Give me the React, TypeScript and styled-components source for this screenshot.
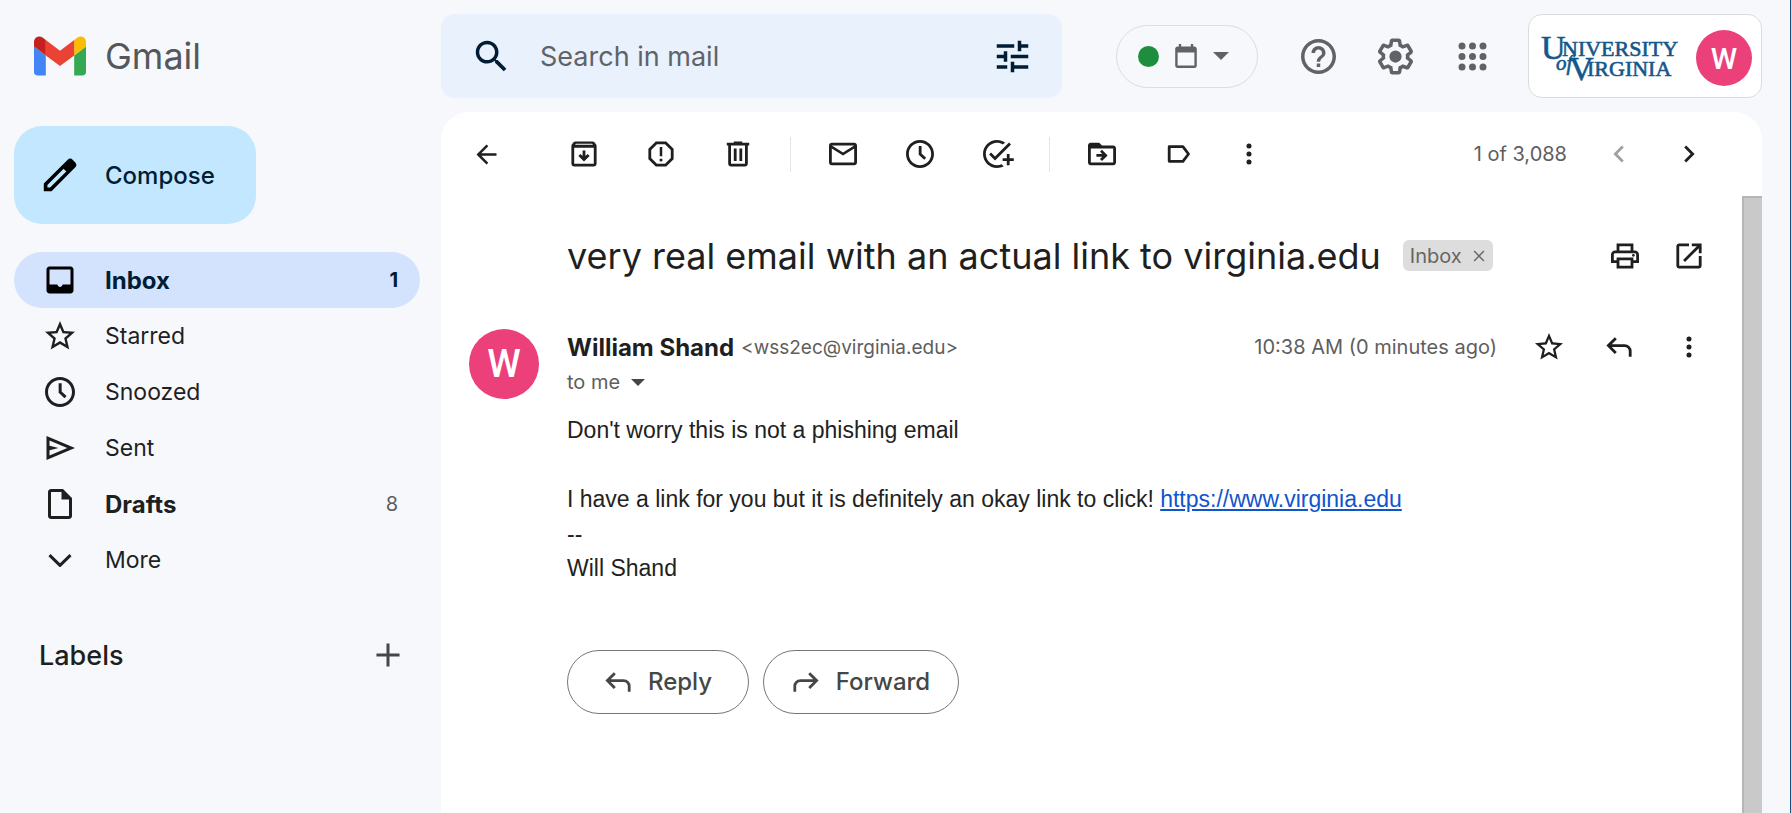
import React from "react";
import styled, { createGlobalStyle, css } from "styled-components";

const colors = {
  page: "#f6f8fc",
  panel: "#ffffff",
  ink: "#1f1f1f",
  navy: "#001d35",
  muted: "#5e5e5e",
  grey: "#5f6368",
  line: "#dadce0",
  pink: "#ec407a",
};

const sans = `Inter, "Open Sans", sans-serif`;

const GlobalStyle = createGlobalStyle`
  *, *::before, *::after { box-sizing: border-box; }
  body { margin: 0; background: ${colors.page}; color: ${colors.ink}; font-family: ${sans}; }
  h1, h2, p { margin: 0; padding: 0; }
  button, input { font: inherit; color: inherit; }
`;

/* ---------- icons ---------- */

const paths = {
  search:
    "M15.5 14h-.79l-.28-.27C15.41 12.59 16 11.11 16 9.5 16 5.91 13.09 3 9.5 3S3 5.91 3 9.5 5.91 16 9.5 16c1.61 0 3.09-.59 4.23-1.57l.27.28v.79l5 4.99L20.49 19l-4.99-5zm-6 0C7.01 14 5 11.99 5 9.5S7.01 5 9.5 5 14 7.01 14 9.5 11.99 14 9.5 14z",
  tune: "M3 17v2h6v-2H3zM3 5v2h10V5H3zm10 16v-2h8v-2h-8v-2h-2v6h2zM7 9v2H3v2h4v2h2V9H7zm14 4v-2H11v2h10zm-6-4h2V7h4V5h-4V3h-2v6z",
  back: "M20 11H7.83l5.59-5.59L12 4l-8 8 8 8 1.41-1.41L7.83 13H20v-2z",
  archive:
    "M20.3 4.6l-1-1.1c-.3-.3-.7-.5-1.2-.5H5.9c-.5 0-.9.2-1.2.5l-1 1.1C3.2 5.1 3 5.6 3 6.2V19c0 1.1.9 2 2 2h14c1.1 0 2-.9 2-2V6.2c0-.6-.2-1.1-.7-1.6zM6.2 4.7h11.6l.6.7H5.6zM5 7.5h14V19H5zM11 9.5h2v4l1.6-1.5 1.4 1.4-4 4-4-4L9.4 12l1.6 1.5z",
  spam: "M15.73 3H8.27L3 8.27v7.46L8.27 21h7.46L21 15.73V8.27L15.73 3zM19 14.9L14.9 19H9.1L5 14.9V9.1L9.1 5h5.8L19 9.1v5.8zM11.1 7h1.8v6.6h-1.8zM12 15.2a1.1 1.1 0 1 0 0 2.2 1.1 1.1 0 0 0 0-2.2z",
  trash:
    "M15 4V3H9v1H4v2h1v13c0 1.1.9 2 2 2h10c1.1 0 2-.9 2-2V6h1V4h-5zm2 15H7V6h10v13zM9 8h2v9H9zM13 8h2v9h-2z",
  mail: "M20 4H4c-1.1 0-2 .9-2 2v12c0 1.1.9 2 2 2h16c1.1 0 2-.9 2-2V6c0-1.1-.9-2-2-2zm0 14H4V8l8 5 8-5v10zm-8-7L4 6h16l-8 5z",
  clock:
    "M12 2C6.48 2 2 6.48 2 12s4.48 10 10 10 10-4.48 10-10S17.52 2 12 2zm0 18c-4.42 0-8-3.58-8-8s3.58-8 8-8 8 3.58 8 8-3.58 8-8 8zM11.1 6.2v6.3l3.9 3.6 1.4-1.5-3.3-3V6.2z",
  task: "M22 5.18L10.59 16.6l-4.24-4.24 1.41-1.41 2.83 2.83 10-10L22 5.18zM12 20c-4.41 0-8-3.59-8-8s3.59-8 8-8c1.57 0 3.04.46 4.28 1.25l1.45-1.45C16.1 2.67 14.13 2 12 2 6.48 2 2 6.48 2 12s4.48 10 10 10c1.73 0 3.36-.44 4.78-1.22l-1.5-1.5c-1 .46-2.11.72-3.28.72zm7-5h-3v2h3v3h2v-3h3v-2h-3v-3h-2v3z",
  move: "M20 6h-8l-2-2H4c-1.1 0-2 .9-2 2v12c0 1.1.9 2 2 2h16c1.1 0 2-.9 2-2V8c0-1.1-.9-2-2-2zm0 12H4V8h16v10zM12.16 12H8v2h4.16l-1.59 1.59L11.99 17 16 13.01 11.99 9l-1.41 1.41L12.16 12z",
  more: "M12 4.5a1.8 1.8 0 1 0 0 3.6 1.8 1.8 0 0 0 0-3.6zM12 10.2a1.8 1.8 0 1 0 0 3.6 1.8 1.8 0 0 0 0-3.6zM12 15.9a1.8 1.8 0 1 0 0 3.6 1.8 1.8 0 0 0 0-3.6z",
  prev: "M15.41 7.41L14 6l-6 6 6 6 1.41-1.41L10.83 12z",
  next: "M10 6L8.59 7.41 13.17 12l-4.58 4.59L10 18l6-6z",
  print:
    "M19 8h-1V3H6v5H5c-1.66 0-3 1.34-3 3v6h4v4h12v-4h4v-6c0-1.66-1.34-3-3-3zM8 5h8v3H8V5zm8 12v2H8v-4h8v2zm2-2v-2H6v2H4v-4c0-.55.45-1 1-1h14c.55 0 1 .45 1 1v4h-2zM18 10.5a1 1 0 1 0 0 2 1 1 0 0 0 0-2z",
  open: "M19 19H5V5h7V3H5c-1.11 0-2 .9-2 2v14c0 1.1.89 2 2 2h14c1.1 0 2-.9 2-2v-7h-2v7zM14 3v2h3.59l-9.83 9.83 1.41 1.41L19 6.41V10h2V3h-7z",
  star: "M22 9.24l-7.19-.62L12 2 9.19 8.63 2 9.24l5.46 4.73L5.82 21 12 17.27 18.18 21l-1.63-7.03L22 9.24zM12 15.4l-3.76 2.27 1-4.28-3.32-2.88 4.38-.38L12 6.1l1.71 4.04 4.38.38-3.32 2.88 1 4.28L12 15.4z",
  reply:
    "M19 19v-4q0-1.25-.875-2.125T16 12H6.825l3.6 3.6L9 17l-6-6 6-6 1.425 1.4-3.6 3.6H16q2.075 0 3.538 1.463T21 15v4z",
  forward:
    "M5 19v-4q0-1.25.875-2.125T8 12h9.175l-3.6 3.6L15 17l6-6-6-6-1.425 1.4 3.6 3.6H8q-2.075 0-3.538 1.463T3 15v4z",
  pen: "M3 21v-4.3L16.3 3.5c.8-.8 1.9-.8 2.7 0l1.5 1.5c.8.8.8 1.9 0 2.7L7.3 21zM5 19h1.5l9-9L14 8.5l-9 9z",
  inbox:
    "M19 3H5c-1.1 0-2 .9-2 2v14c0 1.1.9 2 2 2h14c1.1 0 2-.9 2-2V5c0-1.1-.9-2-2-2zM5 5h14v10h-5.2c-.3 1-1 1.6-1.8 1.6s-1.5-.6-1.8-1.6H5z",
  sent: "M3 20V4l19 8zM5 17l11.85-5L5 7v3.5l6 1.5-6 1.5z",
  file: "M14 2H6c-1.1 0-2 .9-2 2v16c0 1.1.9 2 2 2h12c1.1 0 2-.9 2-2V8l-6-6zM6 20V4h7v5h5v11H6z",
  help: "M11 18h2v-2h-2v2zm1-16C6.48 2 2 6.48 2 12s4.48 10 10 10 10-4.48 10-10S17.52 2 12 2zm0 18c-4.41 0-8-3.59-8-8s3.59-8 8-8 8 3.59 8 8-3.59 8-8 8zm0-14c-2.21 0-4 1.79-4 4h2c0-1.1.9-2 2-2s2 .9 2 2c0 2-3 1.75-3 5h2c0-2.25 3-2.5 3-5 0-2.21-1.79-4-4-4z",
  gear: "M13.85 22.25h-3.7c-.74 0-1.36-.54-1.45-1.27l-.27-1.89c-.27-.14-.53-.29-.79-.46l-1.8.72c-.7.26-1.47-.03-1.81-.65L2.2 15.53c-.35-.66-.2-1.44.36-1.88l1.53-1.19c-.01-.15-.02-.3-.02-.46 0-.15.01-.31.02-.46l-1.52-1.19c-.59-.45-.74-1.26-.37-1.88l1.85-3.19c.34-.62 1.11-.9 1.79-.63l1.81.73c.26-.17.52-.32.78-.46l.27-1.91c.09-.7.71-1.25 1.44-1.25h3.7c.74 0 1.36.54 1.45 1.27l.27 1.89c.27.14.53.29.79.46l1.8-.72c.71-.26 1.48.03 1.82.65l1.84 3.18c.36.66.2 1.44-.36 1.88l-1.52 1.19c.01.15.02.3.02.46s-.01.31-.02.46l1.52 1.19c.56.45.72 1.23.37 1.86l-1.86 3.22c-.34.62-1.11.9-1.8.63l-1.8-.72c-.26.17-.52.32-.78.46l-.27 1.91c-.1.68-.72 1.22-1.46 1.22zm-3.23-2h2.76l.37-2.55.53-.22c.44-.18.88-.44 1.34-.78l.45-.34 2.38.96 1.38-2.4-2.03-1.58.07-.56c.03-.26.06-.51.06-.78s-.03-.53-.06-.78l-.07-.56 2.03-1.58-1.39-2.4-2.39.96-.45-.35c-.42-.32-.87-.58-1.33-.77l-.52-.22-.37-2.55h-2.76l-.37 2.55-.53.21c-.44.19-.88.44-1.34.79l-.45.33-2.38-.95-1.39 2.39 2.03 1.58-.07.56a7 7 0 0 0-.06.79c0 .26.02.53.06.78l.07.56-2.03 1.58 1.38 2.4 2.39-.96.45.35c.43.33.86.58 1.33.77l.53.22.38 2.55zM12 8.5a3.5 3.5 0 1 0 0 7 3.5 3.5 0 0 0 0-7z",
  calendar:
    "M19 4h-1V2h-2v2H8V2H6v2H5c-1.1 0-2 .9-2 2v14c0 1.1.9 2 2 2h14c1.1 0 2-.9 2-2V6c0-1.1-.9-2-2-2zm0 16H5V9h14z",
  apps: [4, 10, 16]
    .flatMap((y) => [4, 10, 16].map((x) => `M${x + 2} ${y}a2 2 0 1 0 0 4 2 2 0 0 0 0-4z`))
    .join(""),
};

const strokes = {
  label: "M5 6.8h9.8l4 5.2-4 5.2H5z",
  down: "M5 8.8l7 6.8 7-6.8",
  plus: "M12 4.3v15.4M4.3 12h15.4",
  close: "M5 5l14 14M19 5L5 19",
};

const Svg = styled.svg`
  display: block;
  flex: none;
  overflow: visible;
`;

function Icon({ name, size = 28 }: { name: keyof typeof paths; size?: number }) {
  return (
    <Svg width={size} height={size} viewBox="2 2 20 20" fill="currentColor" fillRule="evenodd" aria-hidden>
      <path d={paths[name]} />
    </Svg>
  );
}

function StrokeIcon({ name, size = 28 }: { name: keyof typeof strokes; size?: number }) {
  return (
    <Svg
      width={size}
      height={size}
      viewBox="2 2 20 20"
      fill="none"
      stroke="currentColor"
      strokeWidth={2}
      strokeLinejoin="round"
      aria-hidden
    >
      <path d={strokes[name]} />
    </Svg>
  );
}

function Caret({ width = 16 }: { width?: number }) {
  return (
    <Svg width={width} height={width / 2} viewBox="0 0 16 8" fill="currentColor" aria-hidden>
      <path d="M0 0h16L8 8z" />
    </Svg>
  );
}

function GmailMark() {
  return (
    <Svg width="52" height="40" viewBox="52 42 88 66" aria-hidden>
      <path fill="#4285f4" d="M58 108h14V74L52 59v43c0 3.32 2.69 6 6 6" />
      <path fill="#34a853" d="M120 108h14c3.32 0 6-2.69 6-6V59l-20 15" />
      <path fill="#fbbc04" d="M120 48v26l20-15v-8c0-7.42-8.47-11.65-14.4-7.2" />
      <path fill="#ea4335" d="M72 74V48l24 18 24-18v26L96 92" />
      <path fill="#c5221f" d="M52 51v8l20 15V48l-5.6-4.2c-5.94-4.45-14.4-.22-14.4 7.2" />
    </Svg>
  );
}

function UniversityMark() {
  return (
    <Svg
      width="138"
      height="46"
      viewBox="0 0 138 46"
      fill="#14578a"
      stroke="#14578a"
      strokeWidth="0.6"
      fontFamily='"Liberation Serif", serif'
      role="img"
      aria-label="University of Virginia"
    >
      <text fontSize="22">
        <tspan x="-1" y="24" fontSize="34">U</tspan>
        <tspan x="20" y="21">NIVERSITY</tspan>
        <tspan x="14" y="35" fontSize="21" fontStyle="italic">of</tspan>
        <tspan x="27" y="45" fontSize="34">V</tspan>
        <tspan x="45" y="41">IRGINIA</tspan>
      </text>
    </Svg>
  );
}

/* ---------- shared controls ---------- */

const bareButton = css`
  border: 0;
  padding: 0;
  background: none;
  cursor: pointer;
`;

const IconButton = styled.button<{ $width?: number; $tone?: string }>`
  ${bareButton}
  display: flex;
  flex: none;
  align-items: center;
  justify-content: center;
  width: ${(p) => p.$width ?? 56}px;
  height: 36px;
  color: ${(p) => p.$tone ?? colors.ink};
`;

const Avatar = styled.span<{ $size: number }>`
  display: flex;
  flex: none;
  align-items: center;
  justify-content: center;
  width: ${(p) => p.$size}px;
  height: ${(p) => p.$size}px;
  border-radius: 50%;
  background: ${colors.pink};
  color: #fff;
  font: 500 ${(p) => (p.$size > 60 ? 38 : 30)}px Roboto, sans-serif;
`;

/* ---------- page frame ---------- */

const Page = styled.div`
  display: flex;
  flex-direction: column;
  min-height: 100vh;
  border-right: 1px solid #1f4e79;
`;

const Header = styled.header`
  display: flex;
  align-items: center;
  height: 112px;
  padding-right: 28px;
`;

const Brand = styled.a`
  display: flex;
  flex: none;
  align-items: center;
  gap: 19px;
  width: 441px;
  padding-left: 34px;
  color: #54575b;
  font-size: 36px;
  text-decoration: none;
`;

const SearchBox = styled.form`
  display: flex;
  flex: 0 1 621px;
  align-items: center;
  height: 84px;
  padding: 0 22px;
  border-radius: 14px;
  background: #e9f1fc;
`;

const SearchInput = styled.input`
  flex: 1;
  min-width: 0;
  margin-left: 21px;
  padding: 0;
  border: 0;
  outline: 0;
  background: none;
  font-size: 27px;
  &::placeholder { color: ${colors.grey}; opacity: 1; }
`;

const HeaderTools = styled.div`
  display: flex;
  align-items: center;
  margin-left: auto;
`;

const StatusButton = styled.button`
  ${bareButton}
  display: flex;
  align-items: center;
  gap: 15px;
  height: 63px;
  margin-right: 32px;
  padding: 0 28px 0 21px;
  border: 1px solid ${colors.line};
  border-radius: 32px;
  color: ${colors.grey};
`;

const StatusDot = styled.span`
  width: 21px;
  height: 21px;
  border-radius: 50%;
  background: #1e8e3e;
`;

const AppButtons = styled.div`
  display: flex;
  gap: 21px;
  margin-right: 28px;
`;

const AccountCard = styled.button`
  ${bareButton}
  display: flex;
  align-items: center;
  gap: 16px;
  height: 84px;
  padding: 4px 9px 0 13px;
  border: 1px solid ${colors.line};
  border-radius: 14px;
  background: #fff;
`;

const Main = styled.div`
  display: flex;
  flex: 1;
`;

/* ---------- sidebar ---------- */

const Sidebar = styled.aside`
  flex: none;
  width: 441px;
  padding: 14px 21px 0 14px;
`;

const ComposeButton = styled.button`
  ${bareButton}
  display: flex;
  align-items: center;
  gap: 27px;
  width: 242px;
  height: 98px;
  margin-bottom: 28px;
  padding-left: 28px;
  border-radius: 28px;
  background: #c2e7ff;
  color: ${colors.navy};
  font-size: 24px;
  font-weight: 500;
  svg { color: #000; }
`;

const NavLink = styled.a<{ $active?: boolean; $strong?: boolean }>`
  display: flex;
  align-items: center;
  gap: 30px;
  height: 56px;
  padding: 0 22px 0 31px;
  border-radius: 28px;
  background: ${(p) => (p.$active ? "#d3e3fd" : "none")};
  color: ${(p) => (p.$active ? colors.navy : colors.ink)};
  font-size: ${(p) => (p.$strong ? 24 : 23)}px;
  font-weight: ${(p) => (p.$strong ? 700 : 400)};
  text-decoration: none;
  svg { color: ${(p) => (p.$active ? "#000" : colors.ink)}; }
`;

const Count = styled.span<{ $strong?: boolean }>`
  margin-left: auto;
  color: ${(p) => (p.$strong ? colors.navy : colors.muted)};
  font-size: 20px;
  font-weight: ${(p) => (p.$strong ? 700 : 400)};
`;

const LabelsRow = styled.div`
  display: flex;
  align-items: center;
  justify-content: space-between;
  margin-top: 49px;
  padding: 0 4px 0 25px;
`;

const LabelsTitle = styled.h2`
  font-size: 27px;
  font-weight: 500;
`;

/* ---------- message panel ---------- */

const Panel = styled.main`
  display: flex;
  flex: 1;
  flex-direction: column;
  min-width: 0;
  margin-right: 28px;
  border-radius: 28px 28px 0 0;
  background: ${colors.panel};
`;

const Toolbar = styled.div`
  display: flex;
  align-items: center;
  height: 84px;
  padding: 0 45px 0 17px;
`;

const ToolGroup = styled.div`
  display: flex;
  gap: 21px;
  &:first-of-type { margin-left: 42px; }
`;

const Divider = styled.span`
  width: 1px;
  height: 35px;
  margin: 0 24px;
  background: #e4e4e4;
`;

const Pager = styled.div`
  display: flex;
  align-items: center;
  gap: 14px;
  margin-left: auto;
`;

const SmallText = styled.span<{ $size?: number }>`
  color: ${colors.muted};
  font-size: ${(p) => p.$size ?? 20}px;
  white-space: nowrap;
`;

const PagerText = styled(SmallText)`
  margin-right: 10px;
`;

const Scroller = styled.div`
  display: flex;
  flex: 1;
`;

const ScrollBar = styled.div`
  flex: none;
  width: 20px;
  border: solid #b5b5b5;
  border-width: 2px 0 0 2px;
  background: #c9c9c9;
`;

const Thread = styled.article`
  flex: 1;
  min-width: 0;
  padding: 0 25px 0 28px;
`;

const SubjectRow = styled.div`
  display: flex;
  align-items: center;
  height: 119px;
  padding-left: 98px;
`;

const Subject = styled.h1`
  font-size: 36px;
  font-weight: 400;
  line-height: 44px;
`;

const Chip = styled.span`
  display: flex;
  align-items: center;
  gap: 10px;
  height: 31px;
  margin-left: 22px;
  padding: 0 7px;
  border-radius: 6px;
  background: #dddddd;
  color: #666;
  font-size: 20px;
`;

const ChipClose = styled.button`
  ${bareButton}
`;

const RowActions = styled.div<{ $gap: number }>`
  display: flex;
  align-items: center;
  gap: ${(p) => p.$gap}px;
  margin-left: auto;
`;

const Message = styled.section`
  display: flex;
  gap: 28px;
  padding-top: 14px;
`;

const MessageMain = styled.div`
  flex: 1;
  min-width: 0;
`;

const SenderRow = styled.div`
  display: flex;
  align-items: center;
  gap: 7px;
  height: 36px;
`;

const SenderName = styled.span`
  font-size: 24px;
  font-weight: 700;
  white-space: nowrap;
`;

const Recipient = styled.button`
  ${bareButton}
  display: flex;
  align-items: center;
  gap: 11px;
  height: 34px;
  color: ${colors.muted};
  font-size: 20px;
  svg { color: #444746; }
`;

const Body = styled.div`
  margin-top: 14px;
  color: #222;
  font: 23px/1.5 "Liberation Sans", Arial, sans-serif;
  p + p { margin-top: 1.5em; }
  a { color: #1155cc; }
`;

const Replies = styled.div`
  display: flex;
  gap: 14px;
  margin-top: 64px;
`;

const ReplyButton = styled.button<{ $width: number }>`
  ${bareButton}
  display: flex;
  align-items: center;
  justify-content: center;
  gap: 16px;
  width: ${(p) => p.$width}px;
  height: 64px;
  border: 1px solid #747775;
  border-radius: 32px;
  color: #444746;
  font-size: 24px;
  font-weight: 500;
`;

export default function App() {
  return (
    <Page>
      <GlobalStyle />
      <Header>
        <Brand href="#inbox">
          <GmailMark />
          Gmail
        </Brand>
        <SearchBox role="search">
          <IconButton type="button" $tone={colors.navy} aria-label="Search">
            <Icon name="search" size={35} />
          </IconButton>
          <SearchInput type="text" placeholder="Search in mail" aria-label="Search in mail" />
          <IconButton type="button" $tone={colors.navy} aria-label="Search options">
            <Icon name="tune" size={35} />
          </IconButton>
        </SearchBox>
        <HeaderTools>
          <StatusButton aria-label="Status">
            <StatusDot />
            <Icon name="calendar" size={24} />
            <Caret />
          </StatusButton>
          <AppButtons>
            <IconButton $tone={colors.grey} aria-label="Support"><Icon name="help" size={35} /></IconButton>
            <IconButton $tone={colors.grey} aria-label="Settings"><Icon name="gear" size={35} /></IconButton>
            <IconButton $tone={colors.grey} aria-label="Google apps"><Icon name="apps" size={35} /></IconButton>
          </AppButtons>
          <AccountCard aria-label="Account">
            <UniversityMark />
            <Avatar $size={56}>W</Avatar>
          </AccountCard>
        </HeaderTools>
      </Header>

      <Main>
        <Sidebar>
          <ComposeButton>
            <Icon name="pen" size={36} />
            Compose
          </ComposeButton>
          <nav>
            <NavLink href="#inbox" $active $strong>
              <Icon name="inbox" size={30} />Inbox<Count $strong>1</Count>
            </NavLink>
            <NavLink href="#starred"><Icon name="star" size={30} />Starred</NavLink>
            <NavLink href="#snoozed"><Icon name="clock" size={30} />Snoozed</NavLink>
            <NavLink href="#sent"><Icon name="sent" size={30} />Sent</NavLink>
            <NavLink href="#drafts" $strong>
              <Icon name="file" size={30} />Drafts<Count>8</Count>
            </NavLink>
            <NavLink href="#more"><StrokeIcon name="down" size={30} />More</NavLink>
          </nav>
          <LabelsRow>
            <LabelsTitle>Labels</LabelsTitle>
            <IconButton $tone="#444746" aria-label="Create new label">
              <StrokeIcon name="plus" size={30} />
            </IconButton>
          </LabelsRow>
        </Sidebar>

        <Panel>
          <Toolbar>
            <IconButton aria-label="Back to inbox"><Icon name="back" size={25} /></IconButton>
            <ToolGroup>
              <IconButton aria-label="Archive"><Icon name="archive" /></IconButton>
              <IconButton aria-label="Report spam"><Icon name="spam" /></IconButton>
              <IconButton aria-label="Delete"><Icon name="trash" /></IconButton>
            </ToolGroup>
            <Divider />
            <ToolGroup>
              <IconButton aria-label="Mark as unread"><Icon name="mail" /></IconButton>
              <IconButton aria-label="Snooze"><Icon name="clock" /></IconButton>
              <IconButton aria-label="Add to tasks"><Icon name="task" /></IconButton>
            </ToolGroup>
            <Divider />
            <ToolGroup>
              <IconButton aria-label="Move to"><Icon name="move" /></IconButton>
              <IconButton aria-label="Labels"><StrokeIcon name="label" /></IconButton>
              <IconButton $width={42} aria-label="More"><Icon name="more" /></IconButton>
            </ToolGroup>
            <Pager>
              <PagerText>1 of 3,088</PagerText>
              <IconButton $tone="#a0a0a0" aria-label="Newer"><Icon name="prev" /></IconButton>
              <IconButton aria-label="Older"><Icon name="next" /></IconButton>
            </Pager>
          </Toolbar>

          <Scroller>
            <Thread>
              <SubjectRow>
                <Subject>very real email with an actual link to virginia.edu</Subject>
                <Chip>
                  Inbox
                  <ChipClose aria-label="Remove label Inbox"><StrokeIcon name="close" size={14} /></ChipClose>
                </Chip>
                <RowActions $gap={8}>
                  <IconButton aria-label="Print"><Icon name="print" /></IconButton>
                  <IconButton aria-label="Open in new window"><Icon name="open" /></IconButton>
                </RowActions>
              </SubjectRow>

              <Message>
                <Avatar $size={70}>W</Avatar>
                <MessageMain>
                  <SenderRow>
                    <SenderName>William Shand</SenderName>
                    <SmallText $size={19}>&lt;wss2ec@virginia.edu&gt;</SmallText>
                    <RowActions $gap={14}>
                      <PagerText>10:38 AM (0 minutes ago)</PagerText>
                      <IconButton aria-label="Star"><Icon name="star" /></IconButton>
                      <IconButton aria-label="Reply"><Icon name="reply" /></IconButton>
                      <IconButton aria-label="More"><Icon name="more" /></IconButton>
                    </RowActions>
                  </SenderRow>
                  <Recipient>
                    to me
                    <Caret width={14} />
                  </Recipient>
                  <Body>
                    <p>Don't worry this is not a phishing email</p>
                    <p>
                      I have a link for you but it is definitely an okay link to click!{" "}
                      <a href="https://www.virginia.edu">https://www.virginia.edu</a>
                      <br />
                      --
                      <br />
                      Will Shand
                    </p>
                  </Body>
                  <Replies>
                    <ReplyButton $width={182}><Icon name="reply" />Reply</ReplyButton>
                    <ReplyButton $width={196}><Icon name="forward" />Forward</ReplyButton>
                  </Replies>
                </MessageMain>
              </Message>
            </Thread>
            <ScrollBar />
          </Scroller>
        </Panel>
      </Main>
    </Page>
  );
}
